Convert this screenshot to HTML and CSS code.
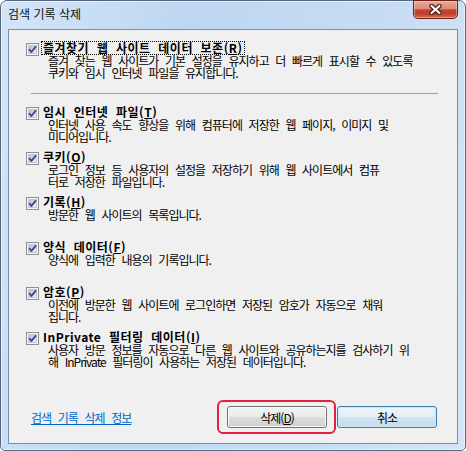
FILE: index.html
```html
<!DOCTYPE html>
<html lang="ko">
<head>
    <meta charset="UTF-8">
    <title>검색 기록 삭제</title>
    <link rel="stylesheet" href="styles.css">
</head>
<body>
    <!-- shared checkbox drawing -->
    <svg class="defs" aria-hidden="true">
        <defs>
            <linearGradient id="cbFill" x1="0" y1="0" x2="1" y2="1">
                <stop offset="0" stop-color="#b9bec6"/>
                <stop offset="1" stop-color="#f3f4f6"/>
            </linearGradient>
            <symbol id="cb" viewBox="0 0 13 13">
                <rect x="0.5" y="0.5" width="12" height="12" fill="#f6f6f6" stroke="#8e8f8f"/>
                <rect x="2.5" y="2.5" width="8" height="8" fill="url(#cbFill)" stroke="#c4c8ce"/>
                <path d="M3.2 6.2 L5.4 9 L10 3.3" fill="none" stroke="#32479a" stroke-width="1.9" stroke-linejoin="round"/>
            </symbol>
        </defs>
    </svg>

    <div class="window">
        <div class="titlebar">
            <span class="title">검색 기록 삭제</span>
            <button class="close">
                <svg width="13" height="11" viewBox="0 0 13 11">
                    <path d="M2.5 2 L10.5 9 M10.5 2 L2.5 9" stroke="#4b1c14" stroke-width="4.4" stroke-linecap="round"/>
                    <path d="M2.5 2 L10.5 9 M10.5 2 L2.5 9" stroke="#ffffff" stroke-width="2.2" stroke-linecap="round"/>
                </svg>
            </button>
        </div>

        <div class="client">
            <div class="option">
                <svg class="cb"><use href="#cb"/></svg>
                <div class="text">
                    <div class="label"><span class="focus">즐겨찾기 웹 사이트 데이터 보존(<u>R</u>)</span></div>
                    <div class="desc">즐겨 찾는 웹 사이트가 기본 설정을 유지하고 더 빠르게 표시할 수 있도록<br>쿠키와 임시 인터넷 파일을 유지합니다.</div>
                </div>
            </div>

            <div class="sep"></div>

            <div class="option">
                <svg class="cb"><use href="#cb"/></svg>
                <div class="text">
                    <div class="label">임시 인터넷 파일(<u>T</u>)</div>
                    <div class="desc">인터넷 사용 속도 향상을 위해 컴퓨터에 저장한 웹 페이지, 이미지 및<br>미디어입니다.</div>
                </div>
            </div>

            <div class="option">
                <svg class="cb"><use href="#cb"/></svg>
                <div class="text">
                    <div class="label">쿠키(<u>O</u>)</div>
                    <div class="desc">로그인 정보 등 사용자의 설정을 저장하기 위해 웹 사이트에서 컴퓨<br>터로 저장한 파일입니다.</div>
                </div>
            </div>

            <div class="option">
                <svg class="cb"><use href="#cb"/></svg>
                <div class="text">
                    <div class="label">기록(<u>H</u>)</div>
                    <div class="desc">방문한 웹 사이트의 목록입니다.</div>
                </div>
            </div>

            <div class="option">
                <svg class="cb"><use href="#cb"/></svg>
                <div class="text">
                    <div class="label">양식 데이터(<u>F</u>)</div>
                    <div class="desc">양식에 입력한 내용의 기록입니다.</div>
                </div>
            </div>

            <div class="option">
                <svg class="cb"><use href="#cb"/></svg>
                <div class="text">
                    <div class="label">암호(<u>P</u>)</div>
                    <div class="desc">이전에 방문한 웹 사이트에 로그인하면 저장된 암호가 자동으로 채워<br>집니다.</div>
                </div>
            </div>

            <div class="option">
                <svg class="cb"><use href="#cb"/></svg>
                <div class="text">
                    <div class="label">InPrivate 필터링 데이터(<u>I</u>)</div>
                    <div class="desc">사용자 방문 정보를 자동으로 다른 웹 사이트와 공유하는지를 검사하기 위<br>해 InPrivate 필터링이 사용하는 저장된 데이터입니다.</div>
                </div>
            </div>

            <div class="footer">
                <a href="#" class="link">검색 기록 삭제 정보</a>
                <div class="buttons">
                    <span class="highlight"><button class="btn">삭제(<u>D</u>)</button></span>
                    <button class="btn default">취소</button>
                </div>
            </div>
        </div>
    </div>
</body>
</html>
```

FILE: styles.css
```css
body {
    margin: 0;
    font-family: "Noto Sans CJK KR", "Noto Sans", sans-serif;
    font-size: 12px;
    color: #000;
    background: #fff;
}
.defs {
    position: absolute;
    width: 0;
    height: 0;
}
.window {
    width: 466px;
    height: 451px;
    box-sizing: border-box;
    border: 1px solid #56667c;
    border-radius: 7px 7px 5px 5px;
    background: linear-gradient(100deg, #d3e5f8 0%, #bdd7f2 35%, #c6dcf3 70%, #d4e5f6 100%);
    box-shadow: inset 0 0 0 1px rgba(255, 255, 255, 0.55);
    display: flex;
    flex-direction: column;
}
.titlebar {
    height: 28px;
    display: flex;
    align-items: flex-start;
    justify-content: space-between;
}
.title {
    padding: 5px 0 0 7px;
    line-height: 16px;
    color: #111;
}
.close {
    width: 45px;
    height: 19px;
    margin: -1px 7px 0 0;
    padding: 0;
    border: 1px solid #6b2117;
    border-radius: 0 0 5px 5px;
    background: linear-gradient(#eaa99a 0%, #de8c7a 45%, #c5452f 52%, #bd3d28 72%, #d56a50 100%);
    box-shadow: inset 0 0 0 1px rgba(255, 220, 210, 0.45);
    display: flex;
    align-items: center;
    justify-content: center;
}
.client {
    flex: 1;
    margin: 0 7px 6px 7px;
    border: 1px solid #7e8ea3;
    background: #f0f0f0;
    display: flex;
    flex-direction: column;
    padding-top: 12px;
}
.option {
    display: flex;
    height: 45px;
    padding-left: 17px;
}
.cb {
    width: 13px;
    height: 13px;
    margin-top: 1px;
    flex: none;
}
.text {
    margin-left: 4px;
}
.label {
    font-weight: bold;
    line-height: 12px;
    height: 12px;
    white-space: nowrap;
    letter-spacing: 0.5px;
    word-spacing: 3.8px;
}
.focus {
    display: inline-block;
    margin-left: -1px;
    padding: 0 2px 0 1px;
    outline: 1px dotted #000;
}
.desc {
    margin-top: 1px;
    padding-left: 5px;
    line-height: 12px;
    letter-spacing: -1px;
    word-spacing: 4.3px;
    white-space: nowrap;
}
.sep {
    height: 1px;
    margin: 6px 19px 12px 22px;
    background: #a0a0a0;
}
.footer {
    display: flex;
    align-items: center;
    margin-top: 30px;
    padding: 0 20px 0 22px;
}
.link {
    color: #0066cc;
    text-decoration: underline;
    letter-spacing: -1px;
    word-spacing: 4.3px;
}
.buttons {
    margin-left: auto;
    display: flex;
    gap: 10px;
}
.btn {
    width: 100px;
    height: 22px;
    padding: 0;
    border: 1px solid #707070;
    border-radius: 3px;
    background: linear-gradient(#f2f2f2 0%, #ebebeb 50%, #dddddd 50%, #cfcfcf 100%);
    box-shadow: inset 0 0 0 1px #fbfbfb;
    font-family: "Noto Sans CJK KR", sans-serif;
    font-size: 12px;
    color: #000;
    letter-spacing: -1px;
}
.btn.default {
    border-color: #3c7fb1;
    background: linear-gradient(#eef5fa 0%, #e4eef6 50%, #d3e4f1 50%, #c6dbec 100%);
    box-shadow: inset 0 0 0 1px #c9ecfb;
}
.highlight {
    position: relative;
    display: flex;
}
.highlight::after {
    content: "";
    position: absolute;
    top: -6px;
    bottom: -6px;
    left: -10px;
    right: -9px;
    border: 2px solid #e0223f;
    border-radius: 6px;
    pointer-events: none;
}
```
